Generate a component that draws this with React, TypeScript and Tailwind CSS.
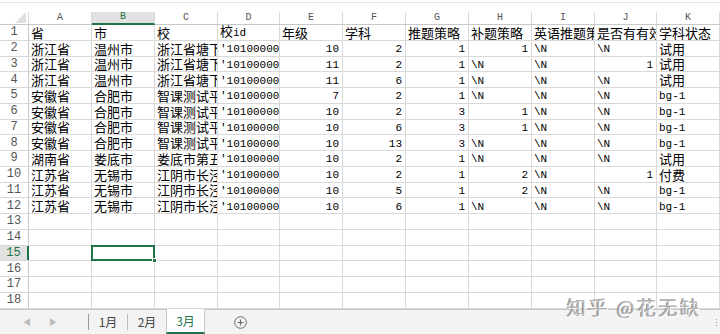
import React from "react";

const COLS = ["A", "B", "C", "D", "E", "F", "G", "H", "I", "J", "K"];
const COL_W = [
  "w-[63px]", "w-[63px]", "w-[63px]", "w-[62px]", "w-[63px]", "w-[63px]",
  "w-[63px]", "w-[63px]", "w-[63px]", "w-[62px]", "w-[63px]",
];

const N = "\\N";
const ID = "'10100000123";

// 表格内容（第 1 行为表头）
const ROWS: string[][] = [
  ["省", "市", "校", "校id", "年级", "学科", "推题策略", "补题策略", "英语推题策略", "是否有有效题目", "学科状态"],
  ["浙江省", "温州市", "浙江省塘下中学", ID, "10", "2", "1", "1", N, N, "试用"],
  ["浙江省", "温州市", "浙江省塘下中学", ID, "11", "2", "1", N, N, "1", "试用"],
  ["浙江省", "温州市", "浙江省塘下中学", ID, "11", "6", "1", N, N, N, "试用"],
  ["安徽省", "合肥市", "智课测试平台", ID, "7", "2", "1", N, N, N, "bg-1"],
  ["安徽省", "合肥市", "智课测试平台", ID, "10", "2", "3", "1", N, N, "bg-1"],
  ["安徽省", "合肥市", "智课测试平台", ID, "10", "6", "3", "1", N, N, "bg-1"],
  ["安徽省", "合肥市", "智课测试平台", ID, "10", "13", "3", N, N, N, "bg-1"],
  ["湖南省", "娄底市", "娄底市第五中学", ID, "10", "2", "1", N, N, N, "试用"],
  ["江苏省", "无锡市", "江阴市长泾中学", ID, "10", "2", "1", "2", N, "1", "付费"],
  ["江苏省", "无锡市", "江阴市长泾中学", ID, "10", "5", "1", "2", N, N, "bg-1"],
  ["江苏省", "无锡市", "江阴市长泾中学", ID, "10", "6", "1", N, N, N, "bg-1"],
];

const TOTAL_ROWS = 18;
const SEL_ROW = 15;
const SEL_COL = 1;

// split into CJK / latin runs so latin stays half width like SimSun
function Txt({ s }: { s: string }) {
  const parts = s.split(/([\u3000-\u9fff\uff00-\uffef]+)/).filter(Boolean);
  return (
    <span className="block leading-[15px] whitespace-nowrap">
      {parts.map((p, i) =>
        /[\u3000-\u9fff\uff00-\uffef]/.test(p) ? (
          <span key={i} className="text-[13px] font-['Noto_Sans_CJK_SC',sans-serif]">{p}</span>
        ) : (
          <span key={i} className="text-[11px] font-['Liberation_Mono',monospace]">{p}</span>
        )
      )}
    </span>
  );
}

function Cell({ value, w, selected }: { value?: string; w: string; selected?: boolean }) {
  const num = value !== undefined && /^\d+$/.test(value);
  return (
    <div
      className={`${w} relative h-full shrink-0 border-r border-[#d9d9d9] flex items-center whitespace-nowrap text-black ${
        num ? "justify-end pr-[3px]" : "pl-[2px]"
      } ${selected ? "" : "overflow-hidden"}`}
    >
      {value && <Txt s={value} />}
      {selected && (
        <>
          <div className="absolute -left-px -top-px -right-px -bottom-px border-2 border-[#217346]" />
          <div className="absolute -right-[3px] -bottom-[3px] w-[5px] h-[5px] bg-[#217346] border border-white" />
        </>
      )}
    </div>
  );
}

function Row({ n }: { n: number }) {
  const data = ROWS[n - 1];
  const sel = n === SEL_ROW;
  return (
    <div className={`flex h-[15.75px] border-b border-[#d9d9d9] shrink-0 ${sel ? "relative z-10" : ""}`}>
      <div
        className={`w-[29px] shrink-0 flex items-center justify-center text-[12px] font-['Liberation_Mono',monospace] ${
          sel ? "bg-[#e1e1e1] text-[#217346] border-r-2 border-[#217346]" : "text-[#555] border-r border-[#c8c8c8]"
        }`}
      >
        {n}
      </div>
      {COLS.map((c, i) => (
        <Cell key={c} w={COL_W[i]} value={data?.[i]} selected={sel && i === SEL_COL} />
      ))}
    </div>
  );
}

function SheetTabs() {
  return (
    <div className="relative flex h-[25px] items-stretch bg-[#f3f3f3] border-t border-[#c8c8c8] text-[12px] font-['Noto_Sans_CJK_SC',sans-serif]">
      <div className="w-[88px] flex items-center gap-[18px] pl-[23px] text-[8px] text-[#bdbdbd]">
        <span>◀</span>
        <span>▶</span>
      </div>
      <div className="my-[4px] w-px bg-[#9a9a9a]" />
      <div className="w-[38px] flex items-center justify-center text-[#444]">1月</div>
      <div className="my-[4px] w-px bg-[#bdbdbd]" />
      <div className="w-[38px] flex items-center justify-center text-[#444]">2月</div>
      <div className="-mt-px w-[39px] flex items-center justify-center bg-white border-x border-[#c8c8c8] border-b-2 border-b-[#217346] text-[#217346]">
        3月
      </div>
      <div className="ml-[29px] flex items-center">
        <svg width="13" height="13" viewBox="0 0 13 13">
          <circle cx="6.5" cy="6.5" r="5.8" fill="none" stroke="#6b6b6b" strokeWidth="1" />
          <path d="M6.5 3.5v6M3.5 6.5h6" stroke="#6b6b6b" strokeWidth="1.2" />
        </svg>
      </div>
      <div className="ml-auto mr-[3px] flex flex-col justify-center gap-[2px]">
        <span className="block w-[1px] h-[1px] bg-[#999]" />
        <span className="block w-[1px] h-[1px] bg-[#999]" />
        <span className="block w-[1px] h-[1px] bg-[#999]" />
      </div>
    </div>
  );
}

export default function App() {
  return (
    <div className="relative w-[720px] h-[334px] overflow-hidden bg-white flex flex-col">
      {/* top strip (formula bar edge) */}
      <div className="h-[12px] shrink-0 pt-[2px]">
        <div className="h-px bg-[#e6e6e6]" />
      </div>

      {/* column headers */}
      <div className="flex h-[13px] shrink-0 border-b border-[#c8c8c8]">
        <div className="w-[29px] shrink-0 relative border-r border-[#d9d9d9]">
          <div className="absolute right-[2px] bottom-[1px] w-0 h-0 border-l-[11px] border-l-transparent border-b-[11px] border-b-[#dfdfdf]" />
        </div>
        {COLS.map((c, i) => (
          <div
            key={c}
            className={`${COL_W[i]} shrink-0 flex items-end justify-center pb-px text-[10px] leading-none font-['Liberation_Mono',monospace] border-r border-[#d9d9d9] ${
              i === SEL_COL ? "bg-[#e1e1e1] text-[#217346] border-b-2 border-b-[#217346] -mb-px" : "text-[#555]"
            }`}
          >
            {c}
          </div>
        ))}
      </div>

      {/* grid body */}
      <div className="flex-1 min-h-0 overflow-hidden flex flex-col">
        {Array.from({ length: TOTAL_ROWS }, (_, i) => (
          <Row key={i} n={i + 1} />
        ))}
      </div>

      <SheetTabs />

      {/* 水印 */}
      <div className="absolute left-[567px] top-[293px] text-[19px] tracking-[2.5px] text-[#b5b5b5] font-['Noto_Sans_CJK_SC',sans-serif] [text-shadow:1px_1px_0_#ffffff,-1px_0_0_#8a8a8a]">
        知乎 @花无缺
      </div>
    </div>
  );
}
